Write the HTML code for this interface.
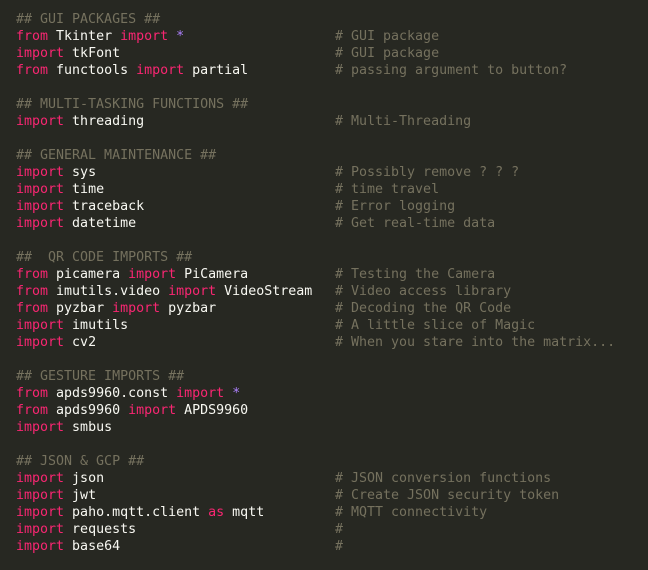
<!DOCTYPE html>
<html><head><style>
html,body{margin:0;padding:0;background:#272822;width:648px;height:570px;overflow:hidden}
pre{margin:0;padding:11px 0 0 16px;font-family:"DejaVu Sans Mono","Liberation Mono",monospace;font-size:13.3px;line-height:17px;color:#f8f8f2}
.k{color:#f92672}.c{color:#75715e}.p{color:#ae81ff}
i{font-style:normal;display:inline-block;width:319px}
</style></head><body><pre><span class="c">## GUI PACKAGES ##</span>
<i><span class="k">from</span> Tkinter <span class="k">import</span> <span class="p">*</span></i><span class="c"># GUI package</span>
<i><span class="k">import</span> tkFont</i><span class="c"># GUI package</span>
<i><span class="k">from</span> functools <span class="k">import</span> partial</i><span class="c"># passing argument to button?</span>

<span class="c">## MULTI-TASKING FUNCTIONS ##</span>
<i><span class="k">import</span> threading</i><span class="c"># Multi-Threading</span>

<span class="c">## GENERAL MAINTENANCE ##</span>
<i><span class="k">import</span> sys</i><span class="c"># Possibly remove ? ? ?</span>
<i><span class="k">import</span> time</i><span class="c"># time travel</span>
<i><span class="k">import</span> traceback</i><span class="c"># Error logging</span>
<i><span class="k">import</span> datetime</i><span class="c"># Get real-time data</span>

<span class="c">##  QR CODE IMPORTS ##</span>
<i><span class="k">from</span> picamera <span class="k">import</span> PiCamera</i><span class="c"># Testing the Camera</span>
<i><span class="k">from</span> imutils.video <span class="k">import</span> VideoStream</i><span class="c"># Video access library</span>
<i><span class="k">from</span> pyzbar <span class="k">import</span> pyzbar</i><span class="c"># Decoding the QR Code</span>
<i><span class="k">import</span> imutils</i><span class="c"># A little slice of Magic</span>
<i><span class="k">import</span> cv2</i><span class="c"># When you stare into the matrix...</span>

<span class="c">## GESTURE IMPORTS ##</span>
<span class="k">from</span> apds9960.const <span class="k">import</span> <span class="p">*</span>
<span class="k">from</span> apds9960 <span class="k">import</span> APDS9960
<span class="k">import</span> smbus

<span class="c">## JSON &amp; GCP ##</span>
<i><span class="k">import</span> json</i><span class="c"># JSON conversion functions</span>
<i><span class="k">import</span> jwt</i><span class="c"># Create JSON security token</span>
<i><span class="k">import</span> paho.mqtt.client <span class="k">as</span> mqtt</i><span class="c"># MQTT connectivity</span>
<i><span class="k">import</span> requests</i><span class="c">#</span>
<i><span class="k">import</span> base64</i><span class="c">#</span>
</pre></body></html>
